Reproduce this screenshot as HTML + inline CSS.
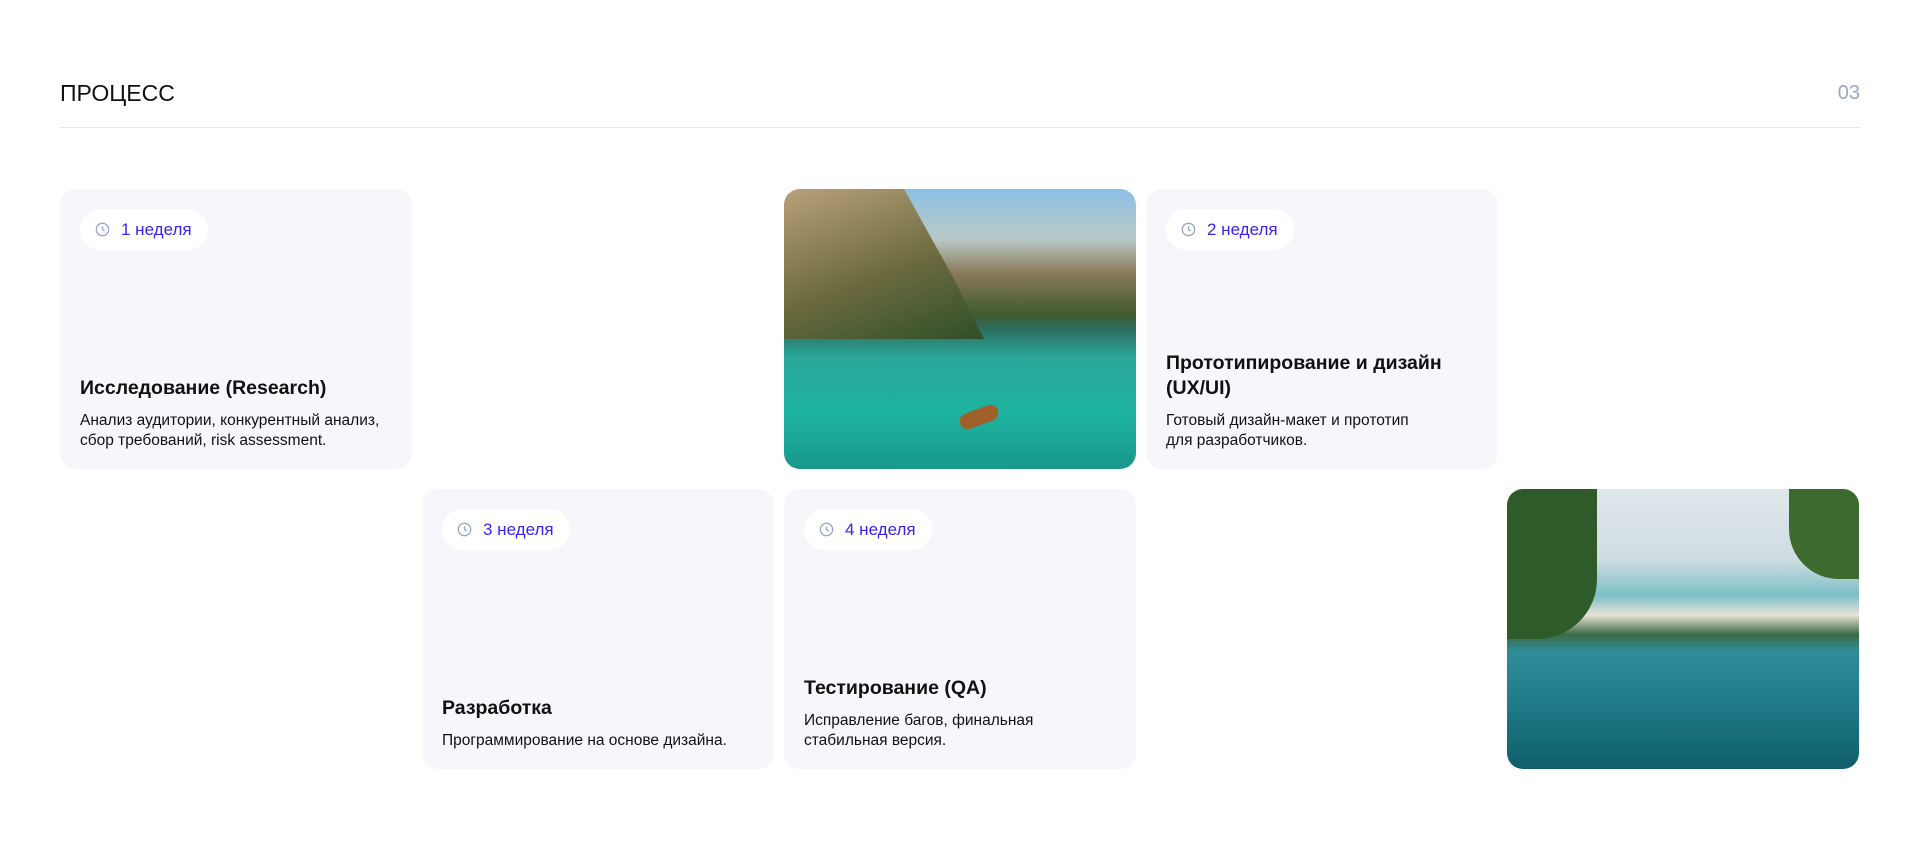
<!DOCTYPE html>
<html><head><meta charset="utf-8"><style>
*{margin:0;padding:0;box-sizing:border-box}
body{width:1920px;height:850px;background:#fff;font-family:"Liberation Sans",sans-serif;position:relative;overflow:hidden}
.h{position:absolute;left:60px;top:80px;font-size:23px;color:#111}
.n{position:absolute;right:60px;top:82px;font-size:20px;color:#9aa6c4}
.line{position:absolute;left:60px;right:60px;top:127px;height:1px;background:#e4e6ea}
.c{position:absolute;width:352px;height:280px;border-radius:16px;background:#f6f7fb;overflow:hidden;display:flex;flex-direction:column;justify-content:flex-end;padding:0 20px 18px}
.pill{position:absolute;left:20px;top:20px;height:41px;border-radius:21px;background:#fff;padding:0 16px 0 15px;display:flex;align-items:center;font-size:17px;color:#3a22f0}
.pill svg{margin-right:11px}
.t{font-size:19.5px;font-weight:bold;color:#111;line-height:25px;margin-bottom:10px}
.d{font-size:15.5px;color:#111;line-height:20px}
.img{position:absolute;width:352px;height:280px;border-radius:16px;overflow:hidden}
</style></head><body>
<div class="h">ПРОЦЕСС</div><div class="n">03</div><div class="line"></div>

<div class="c" style="left:60px;top:189px">
<div class="pill"><svg width="15" height="15" viewBox="0 0 16 16"><circle cx="8" cy="8" r="6.6" fill="none" stroke="#9aa6c4" stroke-width="1.4"/><path d="M8 4.5V8l2.3 1.6" fill="none" stroke="#9aa6c4" stroke-width="1.4"/></svg>1 неделя</div>
<div class="t">Исследование (Research)</div>
<div class="d">Анализ аудитории, конкурентный анализ, сбор требований, risk assessment.</div></div>

<div class="img" style="left:784px;top:189px;background:linear-gradient(180deg,#8cc0e6 0%,#b9c9c6 18%,#8a7a5a 30%,#3f5a2e 45%,#2d6e60 50%,#2aa79a 60%,#1fb3a0 80%,#17988a 100%)">
<div style="position:absolute;left:0;top:0;width:200px;height:150px;background:linear-gradient(160deg,#b9a07a,#6b6a3e 55%,#2f4f2a);clip-path:polygon(0 0,60% 0,85% 60%,100% 100%,0 100%)"></div>
<div style="position:absolute;left:175px;top:220px;width:40px;height:16px;background:#a0602a;border-radius:8px;transform:rotate(-20deg)"></div></div>

<div class="c" style="left:1146px;top:189px">
<div class="pill"><svg width="15" height="15" viewBox="0 0 16 16"><circle cx="8" cy="8" r="6.6" fill="none" stroke="#9aa6c4" stroke-width="1.4"/><path d="M8 4.5V8l2.3 1.6" fill="none" stroke="#9aa6c4" stroke-width="1.4"/></svg>2 неделя</div>
<div class="t">Прототипирование и дизайн (UX/UI)</div>
<div class="d">Готовый дизайн-макет и прототип<br>для разработчиков.</div></div>

<div class="c" style="left:422px;top:489px">
<div class="pill"><svg width="15" height="15" viewBox="0 0 16 16"><circle cx="8" cy="8" r="6.6" fill="none" stroke="#9aa6c4" stroke-width="1.4"/><path d="M8 4.5V8l2.3 1.6" fill="none" stroke="#9aa6c4" stroke-width="1.4"/></svg>3 неделя</div>
<div class="t">Разработка</div>
<div class="d">Программирование на основе дизайна.</div></div>

<div class="c" style="left:784px;top:489px">
<div class="pill"><svg width="15" height="15" viewBox="0 0 16 16"><circle cx="8" cy="8" r="6.6" fill="none" stroke="#9aa6c4" stroke-width="1.4"/><path d="M8 4.5V8l2.3 1.6" fill="none" stroke="#9aa6c4" stroke-width="1.4"/></svg>4 неделя</div>
<div class="t">Тестирование (QA)</div>
<div class="d">Исправление багов, финальная<br>стабильная версия.</div></div>

<div class="img" style="left:1507px;top:489px;background:linear-gradient(180deg,#dfe7ea 0%,#cfdde2 25%,#7cbfc6 38%,#e8e2d6 45%,#3b6b45 52%,#2f8c98 58%,#1f7d8a 75%,#0f5e6a 100%)">
<div style="position:absolute;left:0;top:0;width:90px;height:150px;background:#2f5a2a;border-radius:0 0 60px 0"></div>
<div style="position:absolute;right:0;top:0;width:70px;height:90px;background:#3d6a2f;border-radius:0 0 0 50px"></div></div>
</body></html>
